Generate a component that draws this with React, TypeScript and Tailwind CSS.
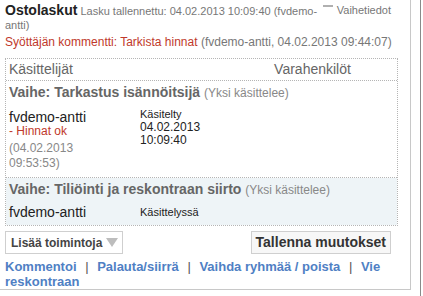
export default function App() {
  return (
    <div className="flex h-[296px] w-[423px] bg-white font-['Liberation_Sans',Arial,sans-serif]">
      <div className="h-[290px] w-[411px] border-r border-b border-[#c8c8c8] pl-[5px] pr-[6px]">
        <Header />
        <p className="mt-[3px] text-[12px] leading-[15px] text-[#c0392b]">
          Syöttäjän kommentti: Tarkista hinnat{' '}
          <span className="text-[#777]">(fvdemo-antti, 04.02.2013 09:44:07)</span>
        </p>

        <div className="mt-[8px] mr-[6px] border border-dotted border-[#b5b5b5]">
          <div className="flex h-[22px] items-center border-b border-dotted border-[#b5b5b5] text-[14px] text-[#666]">
            <span className="w-[222px] pl-[3px]">Käsittelijät</span>
            <span className="flex-1 text-center">Varahenkilöt</span>
          </div>

          <div className="border-b border-dotted border-[#b5b5b5] pb-[6px]">
            <StageTitle title="Vaihe: Tarkastus isännöitsijä" />
            <div className="mt-[8px] flex px-[3px]">
              <div className="w-[131px]">
                <p className="text-[14px] leading-[15px] text-[#222]">fvdemo-antti</p>
                <p className="text-[12px] leading-[13px] text-[#c0392b]">- Hinnat ok</p>
                <p className="mt-[3px] text-[12px] leading-[15px] text-[#888]">
                  (04.02.2013
                  <br />
                  09:53:53)
                </p>
              </div>
              <div className="-mt-[2px] text-[#222]">
                <p className="text-[11px] leading-[13px]">Käsitelty</p>
                <p className="text-[12px] leading-[13px]">04.02.2013</p>
                <p className="text-[12px] leading-[13px]">10:09:40</p>
              </div>
            </div>
          </div>

          <div className="bg-[#eef4f7] pb-[4px]">
            <StageTitle title="Vaihe: Tiliöinti ja reskontraan siirto" />
            <div className="mt-[5px] flex items-center px-[3px]">
              <span className="w-[131px] text-[14px] leading-[17px] text-[#222]">fvdemo-antti</span>
              <span className="text-[11px] text-[#222]">Käsittelyssä</span>
            </div>
          </div>
        </div>

        <div className="mt-[5px] flex items-center justify-between pr-[13px]">
          <button className="flex h-[23px] w-[118px] items-center gap-[4px] border border-[#cfcfcf] bg-white pl-[5px] text-[12px] font-bold text-[#444]">
            Lisää toimintoja
            <svg width="12" height="9" viewBox="0 0 12 9">
              <path d="M0 0h12L6 9z" fill="#bdbdbd" />
            </svg>
          </button>
          <button className="h-[23px] border border-[#cfcfcf] bg-[#f7f7f7] px-[4px] text-[14px] font-bold text-[#333]">
            Tallenna muutokset
          </button>
        </div>

        <p className="mt-[5px] text-[13px] font-bold leading-[15px] text-[#4f80c4]">
          Kommentoi <Sep /> Palauta/siirrä <Sep /> Vaihda ryhmää / poista <Sep /> Vie reskontraan
        </p>
      </div>
      <div className="ml-[9px] h-full w-px bg-[#8a8a8a]" />
    </div>
  );
}

function Header() {
  return (
    <div className="pt-[3px] text-[11px] leading-[14px] text-[#777]">
      <span className="float-right flex items-start gap-[4px] pr-[13px] text-[11px]">
        <svg width="10" height="6" viewBox="0 0 10 6" className="mt-[1px]">
          <rect x="0" y="1" width="10" height="2" fill="#b0b0b0" />
        </svg>
        Vaihetiedot
      </span>
      <span className="text-[14px] font-bold text-[#222]">Ostolaskut</span> Lasku tallennettu: 04.02.2013
      10:09:40 (fvdemo-antti)
    </div>
  );
}

function StageTitle({ title }: { title: string }) {
  return (
    <p className="px-[3px] pt-[3px] text-[14px] leading-[17px] font-bold text-[#666]">
      {title} <span className="text-[12px] font-normal text-[#888]">(Yksi käsittelee)</span>
    </p>
  );
}

function Sep() {
  return <span className="px-[5px] font-normal text-[#555]">|</span>;
}
